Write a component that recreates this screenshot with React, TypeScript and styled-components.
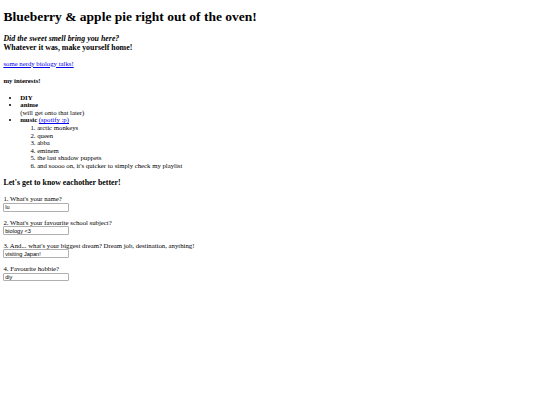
import React from "react";
import styled, { createGlobalStyle } from "styled-components";

// The page is a default-styled document shown at 540/1280 of its size.
const S = 540 / 1280;
const px = (v: number) => `${(v * S).toFixed(3)}px`;

const Global = createGlobalStyle`
  html, body { background: #ffffff; }
  body {
    margin: ${px(8)};
    font-family: "Liberation Serif", "Times New Roman", serif;
    font-size: ${px(16)};
    line-height: ${px(18)};
    color: #000000;
  }
`;

const Page = styled.main`
  display: block;
`;

const Title = styled.h1`
  font-size: ${px(32)};
  line-height: ${px(37)};
  font-weight: bold;
  margin: ${px(14)} 0 ${px(21.44)};
`;

const Heading = styled.h3<{ $gapAbove?: number }>`
  font-size: ${px(18.72)};
  line-height: ${px(21.5)};
  font-weight: bold;
  margin: ${(p) => px(p.$gapAbove ?? 18.72)} 0 ${px(18.72)};
`;

const SmallHeading = styled.h4`
  font-size: ${px(16)};
  line-height: ${px(18)};
  font-weight: bold;
  margin: ${px(22.5)} 0 ${px(21.5)};
`;

const Para = styled.p`
  margin: ${px(16)} 0;
`;

const Link = styled.a`
  color: #0000ee;
  text-decoration: underline;
`;

const Bullets = styled.ul`
  list-style: disc;
  margin: ${px(16)} 0;
  padding-left: ${px(40)};
`;

const Numbered = styled.ol`
  list-style: decimal;
  margin: 0;
  padding-left: ${px(40)};
`;

const Field = styled.input`
  box-sizing: border-box;
  width: ${px(156)};
  height: ${px(21)};
  padding: 0 ${px(2)};
  border: 1px solid #b0b0b0;
  border-radius: 1px;
  font-family: "Liberation Sans", Arial, sans-serif;
  font-size: ${px(13.33)};
  color: #000000;
  background: #ffffff;
  margin: 0;
  vertical-align: baseline;
`;

const songs = [
  "arctic monkeys",
  "queen",
  "abba",
  "eminem",
  "the last shadow puppets",
  "and soooo on, it's quicker to simply check my playlist",
];

const questions = [
  { q: "1. What's your name?", a: "lu" },
  { q: "2. What's your favourite school subject?", a: "biology <3" },
  { q: "3. And... what's your biggest dream? Dream job, destination, anything!", a: "visiting Japan!" },
  { q: "4. Favourite hobbie?", a: "diy" },
];

export default function App() {
  return (
    <Page>
      <Global />
      <Title>Blueberry &amp; apple pie right out of the oven!</Title>
      <Heading>
        <i>Did the sweet smell bring you here?</i>
        <br />
        Whatever it was, make yourself home!
      </Heading>
      <Para>
        <Link href="#">some nerdy biology talks!</Link>
      </Para>
      <SmallHeading>my interests!</SmallHeading>
      <Bullets>
        <li>
          <b>DIY</b>
        </li>
        <li>
          <b>anime</b>
          <br />
          (will get onto that later)
        </li>
        <li>
          <b>music</b> <Link href="#">(spotify :p)</Link>
          <Numbered>
            {songs.map((s) => (
              <li key={s}>{s}</li>
            ))}
          </Numbered>
        </li>
      </Bullets>
      <Heading $gapAbove={21}>Let's get to know eachother better!</Heading>
      {questions.map((item) => (
        <Para key={item.q}>
          {item.q}
          <br />
          <Field type="text" defaultValue={item.a} />
        </Para>
      ))}
    </Page>
  );
}
